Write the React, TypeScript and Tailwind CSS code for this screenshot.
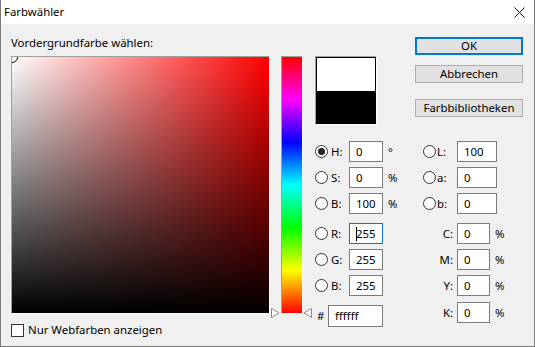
import React from "react";

function Radio({ checked = false }: { checked?: boolean }) {
    return (
        <span className="w-[13px] h-[13px] rounded-full border border-[#333] bg-white flex items-center justify-center shrink-0">
            {checked && <span className="w-[7px] h-[7px] rounded-full bg-[#222]" />}
        </span>
    );
}

function Field({ value, w = "w-[34px]", focused = false }: { value: string; w?: string; focused?: boolean }) {
    return (
        <div className={`${w} h-[21px] bg-white border ${focused ? "border-[#0078d7]" : "border-[#7a7a7a]"} flex items-center pl-[6px] leading-[19px]`}>
            {focused && <span className="w-px h-[14px] bg-black -mr-px" />}
            {value}
        </div>
    );
}

function Btn({ label, primary = false, className = "" }: { label: string; primary?: boolean; className?: string }) {
    return (
        <button
            className={`w-[108px] h-[18px] bg-[#e1e1e1] flex items-center justify-center leading-none text-black ${primary ? "border-2 border-[#0078d7]" : "border border-[#adadad]"} ${className}`}
        >
            {label}
        </button>
    );
}

const hsb = [
    { k: "H", v: "0", unit: "°", checked: true },
    { k: "S", v: "0", unit: "%" },
    { k: "B", v: "100", unit: "%" },
];
const rgb = [
    { k: "R", v: "255", focused: true },
    { k: "G", v: "255" },
    { k: "B", v: "255" },
];
const lab = [
    { k: "L", v: "100" },
    { k: "a", v: "0" },
    { k: "b", v: "0" },
];
const cmyk = ["C", "M", "Y", "K"];

export default function App() {
    return (
        <div
            className="w-[535px] h-[347px] flex flex-col border-x border-b border-[#7a7a7a] bg-[#f0f0f0] text-black text-[11.4px] overflow-hidden"
            style={{ fontFamily: '"Noto Sans", "Open Sans", sans-serif' }}
        >
            {/* Title bar */}
            <div className="h-[24px] bg-white flex items-center justify-between pl-[3px] pr-[9px] shrink-0">
                <span className="leading-none">Farbwähler</span>
                <svg width="11" height="11" viewBox="0 0 11 11" className="text-[#111]">
                    <path d="M0.5 0.5 L10.5 10.5 M10.5 0.5 L0.5 10.5" stroke="currentColor" strokeWidth="1" />
                </svg>
            </div>

            {/* Body */}
            <div className="flex flex-1">
                {/* Color field column */}
                <div className="ml-[10px] pt-[11px] flex flex-col">
                    <div className="h-[21px] leading-[16px]">Vordergrundfarbe wählen:</div>
                    <div className="relative w-[259px] h-[258px] border border-[#a0a0a0] border-r-white border-b-white overflow-hidden">
                        <div className="w-full h-full bg-[linear-gradient(to_top,#000,transparent),linear-gradient(to_right,#fff,#f00)]" />
                        <div className="absolute -left-[6px] -top-[6px] w-[12px] h-[12px] rounded-full border border-black" />
                    </div>
                    <div className="mt-[8px] h-[16px] flex items-center gap-[4px]">
                        <span className="w-[13px] h-[13px] border border-[#333] bg-white" />
                        <span className="leading-none">Nur Webfarben anzeigen</span>
                    </div>
                </div>

                {/* Slider arrow left */}
                <div className="w-[11px] relative">
                    <svg width="9" height="10" viewBox="0 0 9 10" className="absolute left-[1px] top-[284px]">
                        <path d="M0.5 0.5 L8 5 L0.5 9.5 Z" fill="#fff" stroke="#888" strokeWidth="1" />
                    </svg>
                </div>

                {/* Hue bar */}
                <div className="mt-[32px] w-[22px] h-[258px] border border-[#a0a0a0] border-r-white border-b-white">
                    <div className="w-full h-full bg-[linear-gradient(to_bottom,#f00,#f0f,#00f,#0ff,#0f0,#ff0,#f00)]" />
                </div>

                {/* Slider arrow right */}
                <div className="w-[12px] relative">
                    <svg width="9" height="10" viewBox="0 0 9 10" className="absolute left-[0px] top-[284px]">
                        <path d="M8.5 0.5 L1 5 L8.5 9.5 Z" fill="#fff" stroke="#888" strokeWidth="1" />
                    </svg>
                </div>

                {/* Right panel */}
                <div className="pt-[13px] flex flex-col">
                    <div className="flex">
                        <div className="mt-[19px] w-[62px] h-[69px] border border-[#a0a0a0] border-r-white border-b-white">
                            <div className="w-full h-full border border-black flex flex-col">
                                <div className="flex-1 bg-white" />
                                <div className="flex-1 bg-black" />
                            </div>
                        </div>
                        <div className="ml-[38px] flex flex-col">
                            <Btn label="OK" primary />
                            <Btn label="Abbrechen" className="mt-[10px]" />
                            <Btn label="Farbbibliotheken" className="mt-[16px]" />
                        </div>
                    </div>

                    <div className="mt-[16px] flex">
                        {/* HSB / RGB */}
                        <div className="w-[108px] flex flex-col">
                            <div className="flex flex-col gap-[5px]">
                                {hsb.map((r) => (
                                    <div key={r.k} className="h-[21px] flex items-center">
                                        <Radio checked={r.checked} />
                                        <span className="ml-[3px] w-[18px]">{r.k}:</span>
                                        <Field value={r.v} />
                                        <span className="ml-[5px]">{r.unit}</span>
                                    </div>
                                ))}
                            </div>
                            <div className="mt-[9px] flex flex-col gap-[5px]">
                                {rgb.map((r) => (
                                    <div key={r.k} className="h-[21px] flex items-center">
                                        <Radio />
                                        <span className="ml-[3px] w-[18px]">{r.k}:</span>
                                        <Field value={r.v} focused={r.focused} />
                                    </div>
                                ))}
                            </div>
                            <div className="mt-[9px] h-[22px] flex items-center">
                                <span className="ml-[2px] w-[11px]">#</span>
                                <div className="w-[55px] h-[22px] bg-white border border-[#7a7a7a] flex items-center pl-[6px]">ffffff</div>
                            </div>
                        </div>

                        {/* Lab / CMYK */}
                        <div className="flex flex-col">
                            <div className="flex flex-col gap-[5px]">
                                {lab.map((r) => (
                                    <div key={r.k} className="h-[21px] flex items-center">
                                        <Radio />
                                        <span className="ml-[1px] w-[20px]">{r.k}:</span>
                                        <Field value={r.v} w="w-[40px]" />
                                    </div>
                                ))}
                            </div>
                            <div className="mt-[9px] flex flex-col">
                                {cmyk.map((k, i) => (
                                    <div key={k} className={`h-[21px] flex items-center ${i === 3 ? "mt-[6px]" : i > 0 ? "mt-[5px]" : ""}`}>
                                        <span className="w-[30px] text-right">{k}:</span>
                                        <span className="ml-[4px]">
                                            <Field value="0" w="w-[33px]" />
                                        </span>
                                        <span className="ml-[5px]">%</span>
                                    </div>
                                ))}
                            </div>
                        </div>
                    </div>
                </div>
            </div>
        </div>
    );
}
